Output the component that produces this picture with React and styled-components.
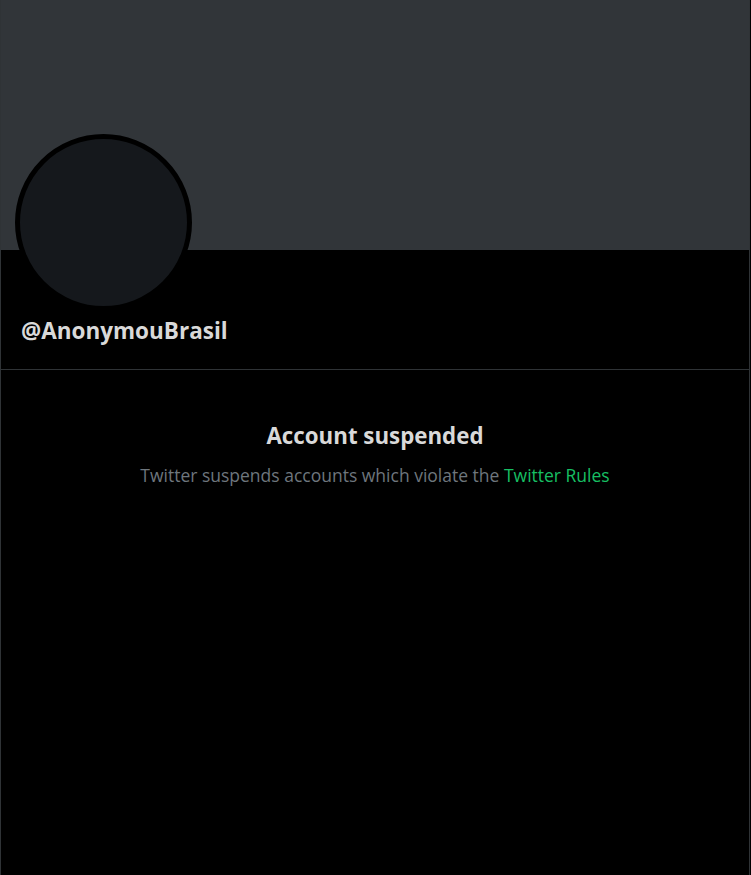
import React from "react";
import styled, { createGlobalStyle } from "styled-components";

const GlobalStyle = createGlobalStyle`
	html, body {
		margin: 0;
		padding: 0;
		background: #000000;
	}
	body {
		font-family: "Open Sans", "Noto Sans", sans-serif;
	}
`;

const Column = styled.main`
	box-sizing: border-box;
	width: 750px;
	min-height: 875px;
	border-left: 1px solid #2f3336;
	border-right: 1px solid #2f3336;
	background: #000000;
`;

const Banner = styled.div`
	height: 250px;
	background: #313539;
`;

const ProfileInfo = styled.section`
	display: flex;
	flex-direction: column;
	align-items: flex-start;
	padding: 0 14px;
	height: 119px;
	border-bottom: 1px solid #2f3336;
`;

const Avatar = styled.div`
	box-sizing: border-box;
	flex-shrink: 0;
	width: 177px;
	height: 177px;
	margin-top: -116px;
	border-radius: 50%;
	border: 5px solid #000000;
	background: #15181c;
`;

const Handle = styled.h2`
	margin: 5px 0 0 6px;
	font-size: 22.5px;
	line-height: 30px;
	font-weight: 700;
	color: #d9d9d9;
`;

const Notice = styled.section`
	display: flex;
	flex-direction: column;
	align-items: center;
	padding-top: 51px;
`;

const Title = styled.h3`
	margin: 0;
	font-size: 22.3px;
	line-height: 30px;
	font-weight: 700;
	color: #d9d9d9;
`;

const Message = styled.p`
	margin: 12px 0 0;
	font-size: 17.5px;
	line-height: 24px;
	color: #6e767d;
`;

const RulesLink = styled.a`
	color: #17bf63;
	text-decoration: none;
`;

export default function App() {
	return (
		<>
			<GlobalStyle />
			<Column>
				<Banner />
				<ProfileInfo>
					<Avatar />
					<Handle>@AnonymouBrasil</Handle>
				</ProfileInfo>
				<Notice>
					<Title>Account suspended</Title>
					<Message>
						Twitter suspends accounts which violate the <RulesLink href="#">Twitter Rules</RulesLink>
					</Message>
				</Notice>
			</Column>
		</>
	);
};
